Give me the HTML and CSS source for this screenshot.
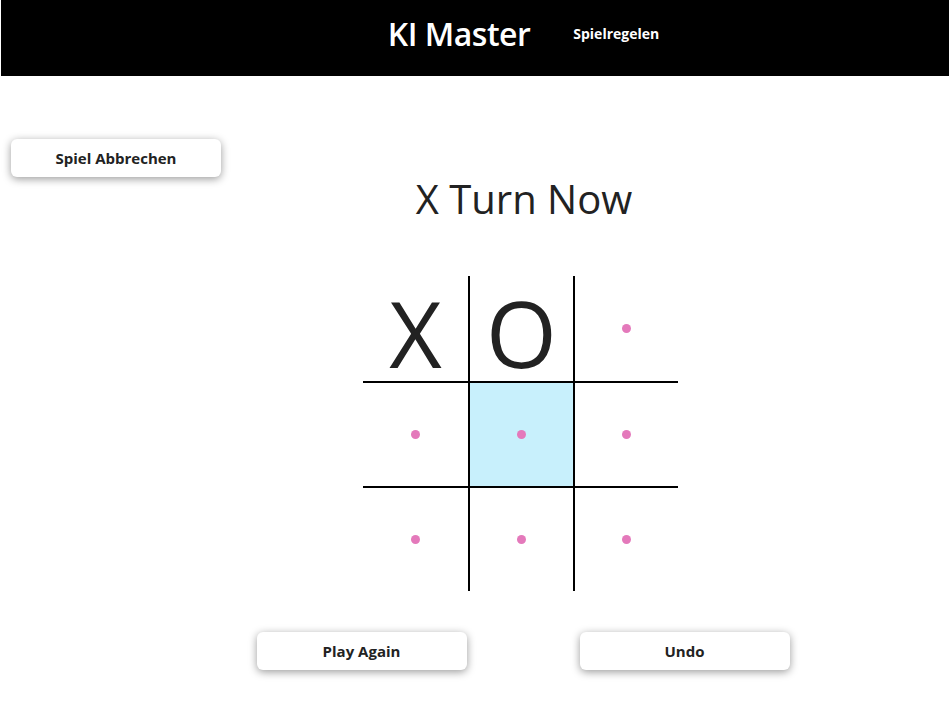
FILE: index.html
```html
<!DOCTYPE html>
<html lang="de">
<head>
<meta charset="utf-8">
<title>KI Master</title>
<link rel="stylesheet" href="styles.css">
</head>
<body>
<header class="topbar">
  <div class="topbar-inner">
    <h1 class="brand">KI Master</h1>
    <a class="nav-link" href="#">Spielregelen</a>
  </div>
</header>
<main class="page">
  <div class="stage">
    <button class="btn btn-abort" type="button">Spiel Abbrechen</button>
    <h2 class="status">X Turn Now</h2>
  </div>
  <div class="board-wrap">
    <div class="board">
      <div class="cell"><span class="mark">X</span></div>
      <div class="cell"><span class="mark">O</span></div>
      <div class="cell"><span class="dot"></span></div>
      <div class="cell"><span class="dot"></span></div>
      <div class="cell cell-active"><span class="dot"></span></div>
      <div class="cell"><span class="dot"></span></div>
      <div class="cell"><span class="dot"></span></div>
      <div class="cell"><span class="dot"></span></div>
      <div class="cell"><span class="dot"></span></div>
    </div>
  </div>
  <div class="actions">
    <button class="btn" type="button">Play Again</button>
    <button class="btn" type="button">Undo</button>
  </div>
</main>
</body>
</html>
```
FILE: styles.css
```css
* { box-sizing: border-box; }
html, body { margin: 0; padding: 0; background: #fff; }
body {
  font-family: "Open Sans", "Noto Sans", sans-serif;
  color: #222;
}
.topbar {
  background: #000;
  height: 76px;
  margin-left: 1px;
}
.topbar-inner {
  display: flex;
  justify-content: center;
  align-items: flex-start;
  gap: 43px;
  padding-left: 97px;
}
.brand {
  margin: 0;
  padding-top: 14px;
  font-size: 32px;
  font-weight: 600;
  color: #fff;
  letter-spacing: -0.5px;
  line-height: 40px;
}
.nav-link {
  margin-top: 24px;
  font-size: 14px;
  font-weight: 700;
  color: #fff;
  text-decoration: none;
  line-height: 20px;
}
.page {
  padding-top: 63px;
  padding-bottom: 40px;
}
.stage {
  display: grid;
}
.stage > * { grid-area: 1 / 1; }
.btn {
  width: 210px;
  height: 38px;
  border: none;
  border-radius: 6px;
  background: #fff;
  box-shadow: 0 2px 9px rgba(0, 0, 0, 0.4);
  font-family: "Open Sans", "Noto Sans", sans-serif;
  font-size: 15px;
  font-weight: 700;
  color: #222;
  cursor: pointer;
}
.btn-abort {
  justify-self: start;
  align-self: start;
  margin-left: 11px;
}
.status {
  justify-self: center;
  margin: 34px 0 0 99px;
  font-size: 40px;
  font-weight: 400;
  line-height: 52px;
  color: #222;
}
.board-wrap {
  display: flex;
  justify-content: center;
  padding-left: 92px;
  margin-top: 51px;
}
.board {
  display: grid;
  grid-template-columns: 105px 105px 105px;
  grid-template-rows: 105px 105px 105px;
}
.cell {
  display: flex;
  align-items: center;
  justify-content: center;
}
.cell:nth-child(3n+2), .cell:nth-child(3n) { border-left: 2px solid #000; }
.cell:nth-child(n+4) { border-top: 2px solid #000; }
.cell-active { background: #c8f0fc; }
.mark {
  font-size: 91px;
  font-weight: 400;
  line-height: 1;
  color: #222;
  padding-top: 10px;
}
.dot {
  width: 9px;
  height: 9px;
  border-radius: 50%;
  background: #e479bb;
}
.actions {
  display: flex;
  justify-content: center;
  gap: 113px;
  padding-left: 97px;
  margin-top: 41px;
}
```
